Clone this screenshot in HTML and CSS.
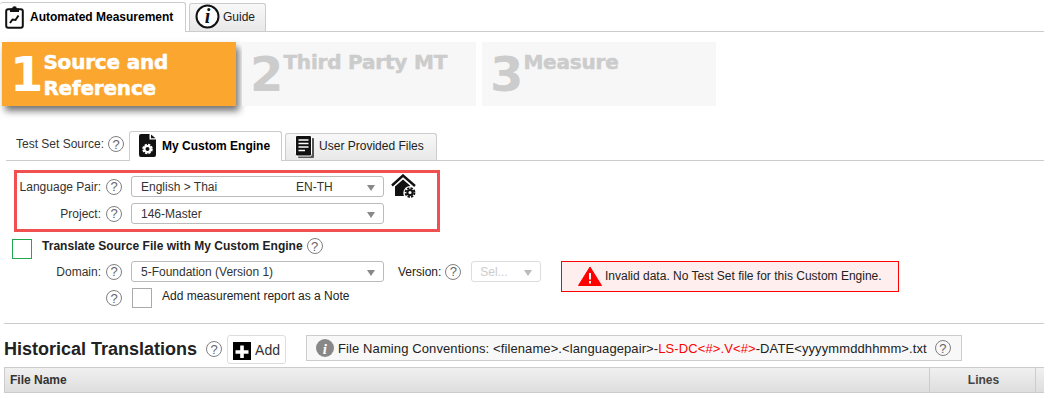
FILE: index.html
```html
<!DOCTYPE html>
<html lang="en">
<head>
    <meta charset="UTF-8">
    <title>Automated Measurement</title>
    <link rel="stylesheet" href="styles.css">
</head>
<body>

<div class="top-tabs">
    <div class="top-tab active">
        <svg class="icon-clip" width="19" height="24" viewBox="0 0 19 24">
            <rect x="1.2" y="4.2" width="16.6" height="18.6" rx="2" fill="none" stroke="#111" stroke-width="2"/>
            <path d="M5 7V3.5H7.2A2.3 2.3 0 0 1 11.8 3.5H14V7Z" fill="#111"/>
            <path d="M5 18L7.5 14.5L10.5 15L13.5 10.5" fill="none" stroke="#111" stroke-width="2"/>
        </svg>
        <span>Automated Measurement</span>
    </div>
    <div class="top-tab">
        <svg width="25" height="25" viewBox="0 0 25 25">
            <circle cx="12.5" cy="12.5" r="11" fill="#fff" stroke="#111" stroke-width="2"/>
            <text x="12.5" y="19" text-anchor="middle" class="info-i">i</text>
        </svg>
        <span>Guide</span>
    </div>
</div>

<div class="steps">
    <div class="step current"><span class="step-num">1</span><span class="step-title">Source and Reference</span></div>
    <div class="step"><span class="step-num">2</span><span class="step-title">Third Party MT</span></div>
    <div class="step"><span class="step-num">3</span><span class="step-title">Measure</span></div>
</div>

<div class="source-tabs">
    <span class="source-label">Test Set Source:</span>
    <span class="help"></span>
    <div class="source-tab active">
        <svg width="17" height="23" viewBox="0 0 17 23">
            <path d="M2 0H10.5V5.5H17V21A2 2 0 0 1 15 23H2A2 2 0 0 1 0 21V2A2 2 0 0 1 2 0Z" fill="#111"/>
            <path d="M12 0.5L16.5 4.2H12Z" fill="#111"/>
            <circle cx="8.5" cy="15" r="3" fill="none" stroke="#fff" stroke-width="2"/>
            <circle cx="8.5" cy="15" r="4.4" fill="none" stroke="#fff" stroke-width="1.8" stroke-dasharray="2.3 1.15"/>
        </svg>
        <span>My Custom Engine</span>
    </div>
    <div class="source-tab">
        <svg width="19" height="23" viewBox="0 0 19 23">
            <rect x="3" y="3" width="16" height="20" rx="1" fill="#555"/>
            <rect x="0.5" y="0.5" width="16" height="20.5" rx="1.5" fill="#111" stroke="#fff" stroke-width="1"/>
            <path d="M3.5 5H13.5M3.5 8.5H13.5M3.5 12H13.5M3.5 15.5H10" stroke="#fff" stroke-width="1.4"/>
        </svg>
        <span>User Provided Files</span>
    </div>
</div>

<div class="highlight">
    <div class="field-row first">
        <label class="field-label">Language Pair:</label>
        <span class="help"></span>
        <div class="select">
            <span class="lang-name">English &gt; Thai</span>
            <span>EN-TH</span>
            <span class="caret"></span>
        </div>
        <svg class="house" width="25" height="25" viewBox="0 0 25 25">
            <path d="M1 11.5L12 1.5L24 12" fill="none" stroke="#111" stroke-width="2.4"/>
            <path d="M4 12.5L12 5.5L19.5 12A7 7 0 0 0 13 22H4Z" fill="#111"/>
            <circle cx="19" cy="18.5" r="2.6" fill="none" stroke="#111" stroke-width="2"/>
            <circle cx="19" cy="18.5" r="4.4" fill="none" stroke="#111" stroke-width="2" stroke-dasharray="2.3 1.15"/>
        </svg>
    </div>
    <div class="field-row">
        <label class="field-label">Project:</label>
        <span class="help"></span>
        <div class="select">
            <span>146-Master</span>
            <span class="caret"></span>
        </div>
    </div>
</div>

<div class="translate-row">
    <span class="check green"></span>
    <b>Translate Source File with My Custom Engine</b>
    <span class="help"></span>
</div>

<div class="domain-block">
    <div class="domain-left">
        <div class="field-row">
            <label class="field-label">Domain:</label>
            <span class="help"></span>
            <div class="select">
                <span>5-Foundation (Version 1)</span>
                <span class="caret"></span>
            </div>
        </div>
        <div class="note-row">
            <span class="help"></span>
            <span class="check"></span>
            <span class="note-text">Add measurement report as a Note</span>
        </div>
    </div>
    <div class="version">
        <label>Version:</label>
        <span class="help"></span>
        <div class="select small">
            <span>Sel...</span>
            <span class="caret"></span>
        </div>
    </div>
    <div class="alert">
        <svg width="24" height="20" viewBox="0 0 24 20">
            <path d="M12 1L23.5 19.5H0.5Z" fill="#f00" stroke="#f00" stroke-linejoin="round"/>
            <path d="M12 7V13.5M12 15V17.5" stroke="#fff" stroke-width="2"/>
        </svg>
        <span>Invalid data. No Test Set file for this Custom Engine.</span>
    </div>
</div>

<div class="history">
    <div class="history-head">
        <h2>Historical Translations</h2>
        <span class="help"></span>
        <div class="add-btn">
            <svg width="18" height="18" viewBox="0 0 18 18">
                <rect width="18" height="18" fill="#000"/>
                <path d="M9 3.5V16M2.5 10H15.5" stroke="#fff" stroke-width="3.6"/>
            </svg>
            <span>Add</span>
        </div>
        <div class="naming">
            <svg width="18" height="18" viewBox="0 0 18 18">
                <circle cx="9" cy="9" r="9" fill="#888"/>
                <text x="9" y="14.5" text-anchor="middle" class="naming-i">i</text>
            </svg>
            <span>File Naming Conventions: &lt;filename&gt;.&lt;languagepair&gt;-<em>LS-DC&lt;#&gt;.V&lt;#&gt;</em>-DATE&lt;yyyymmddhhmm&gt;.txt</span>
            <span class="help"></span>
        </div>
    </div>
    <div class="table-head">
        <div class="col-name">File Name</div>
        <div class="col-lines">Lines</div>
        <div class="col-end"></div>
    </div>
</div>

</body>
</html>
```

FILE: styles.css
```css
body {
    margin: 0;
    font-family: "Liberation Sans", Arial, sans-serif;
    font-size: 12px;
    color: #222;
    background-color: #fff;
    overflow: hidden;
}

.help {
    display: inline-flex;
    justify-content: center;
    align-items: center;
    flex: none;
    width: 16px;
    height: 16px;
    box-sizing: border-box;
    border: 1.5px solid #808080;
    border-radius: 50%;
    color: #666;
    font-size: 13px;
    line-height: 1;
}

.help::before {
    content: "?";
}

/* top tabs */
.top-tabs {
    display: flex;
    align-items: flex-end;
    height: 32px;
    box-sizing: border-box;
    padding-top: 2px;
    border-bottom: 1px solid #ccc;
}

.top-tab {
    display: flex;
    align-items: center;
    gap: 3px;
    width: 77px;
    height: 28px;
    box-sizing: border-box;
    margin-left: 3px;
    padding: 0 0 2px 5px;
    border: 1px solid #ccc;
    border-bottom: none;
    border-radius: 3px 3px 0 0;
    background: linear-gradient(#f8f8f8, #e8e8e8);
}

.top-tab.active {
    width: 186px;
    height: 30px;
    margin: 0 0 -1px 0;
    padding: 0 0 2px 5px;
    gap: 6px;
    border-left: none;
    background: #fff;
    color: #000;
    font-weight: bold;
    font-size: 12px;
}

/* steps */
.steps {
    display: flex;
    gap: 6px;
    margin-top: 10px;
    padding-left: 2px;
}

.step {
    display: flex;
    width: 234px;
    height: 64px;
    box-sizing: border-box;
    padding: 7px 0 0 8px;
    background-color: #f7f7f7;
    color: #ccc;
    font-family: "DejaVu Sans", Verdana, sans-serif;
    font-weight: bold;
}

.step.current {
    background-color: #fba72f;
    color: #fff;
    box-shadow: 3px 5px 7px rgba(0, 0, 0, 0.55);
}

.step-num {
    font-size: 48px;
    line-height: 50px;
    letter-spacing: -1px;
}

.step-title {
    width: 190px;
    margin-left: 1px;
    font-size: 20px;
    line-height: 26px;
    letter-spacing: -0.2px;
    -webkit-text-stroke: 0.5px currentColor;
}

/* source tabs */
.source-tabs {
    display: flex;
    align-items: flex-end;
    height: 30px;
    box-sizing: border-box;
    margin: 25px 0 0 6px;
    padding-left: 10px;
    border-bottom: 1px solid #ccc;
}

.source-label {
    margin-bottom: 9px;
    color: #333;
}

.source-tabs .help {
    margin: 0 5px 8px 4px;
}

.source-tab {
    display: flex;
    align-items: center;
    gap: 5px;
    width: 152px;
    height: 27px;
    box-sizing: border-box;
    margin-left: 3px;
    padding: 0 0 2px 9px;
    border: 1px solid #ccc;
    border-bottom: none;
    border-radius: 3px 3px 0 0;
    background: linear-gradient(#f8f8f8, #e8e8e8);
}

.source-tab.active {
    width: 153px;
    height: 30px;
    margin: 0 0 -1px 0;
    gap: 6px;
    background: #fff;
    color: #000;
    font-weight: bold;
}

/* red box */
.highlight {
    width: 426px;
    height: 62px;
    box-sizing: border-box;
    margin: 9px 0 0 14px;
    padding-top: 3px;
    border: 3px solid #f05050;
}

.field-row {
    display: flex;
    align-items: center;
    margin-bottom: 6px;
}

.highlight .field-label {
    width: 84px;
}

.field-label {
    width: 101px;
    padding-right: 5px;
    box-sizing: content-box;
    text-align: right;
    color: #333;
}

.select {
    position: relative;
    display: flex;
    align-items: center;
    width: 253px;
    height: 21px;
    box-sizing: border-box;
    margin-left: 9px;
    padding-left: 9px;
    border: 1px solid #bbb;
    border-radius: 3px;
    color: #333;
}

.lang-name {
    width: 155px;
}

.caret {
    position: absolute;
    top: 8px;
    right: 8px;
    border-left: 4px solid transparent;
    border-right: 4px solid transparent;
    border-top: 6px solid #888;
}

.house {
    margin: -2px 0 -2px 7px;
}

.check {
    flex: none;
    width: 20px;
    height: 20px;
    box-sizing: border-box;
    border: 1px solid #aaa;
}

.check.green {
    border-color: #1fa84f;
}

.translate-row {
    display: flex;
    align-items: center;
    margin: 7px 0 0 12px;
    color: #222;
}

.translate-row b {
    margin: -6px 0 0 10px;
    letter-spacing: 0.03px;
}

.translate-row .help {
    margin: -6px 0 0 4px;
}

/* domain, version, alert */
.domain-block {
    display: flex;
    align-items: flex-start;
    height: 62px;
    margin-top: 2px;
}

.domain-left .field-row {
    margin-bottom: 6px;
}

.domain-left .field-label {
    padding-right: 5px;
}

.domain-left {
    width: 398px;
}

.note-row {
    display: flex;
    align-items: center;
    padding-left: 106px;
}

.note-row .check {
    margin: 0 10px;
}

.note-text {
    margin-top: -4px;
}

.version {
    display: flex;
    align-items: center;
    gap: 4px;
    width: 163px;
}

.select.small {
    width: 70px;
    margin-left: 6px;
    padding-left: 8px;
    border-color: #ddd;
    color: #ccc;
}

.select.small .caret {
    border-top-color: #bbb;
}

.alert {
    display: flex;
    align-items: center;
    gap: 3px;
    width: 338px;
    height: 31px;
    box-sizing: border-box;
    padding: 0 0 1px 16px;
    border: 1px solid #f00;
    background-color: #feeeee;
    color: #222;
}

/* historical translations */
.history {
    margin: 0 0 0 4px;
    padding-top: 11px;
    border-top: 1px solid #ccc;
}

.history-head {
    display: flex;
    align-items: flex-start;
    height: 32px;
}

.history-head h2 {
    margin: 2px 0 0 0;
    font-size: 18px;
    line-height: 24px;
    color: #222;
}

.history-head > .help {
    margin: 6px 0 0 9px;
}

.add-btn {
    display: flex;
    align-items: center;
    gap: 4px;
    width: 59px;
    height: 29px;
    box-sizing: border-box;
    margin-left: 5px;
    padding-left: 5px;
    border: 1px solid #ddd;
    border-radius: 3px;
    font-size: 14px;
    color: #333;
}

.add-btn svg {
    margin-top: 3px;
}

.naming {
    display: flex;
    align-items: center;
    gap: 4px;
    width: 656px;
    height: 26px;
    box-sizing: border-box;
    margin-left: 20px;
    padding-left: 9px;
    border: 1px solid #ccc;
    background-color: #f8f8f8;
    color: #222;
    font-size: 13px;
    letter-spacing: 0.1px;
}

.naming em {
    font-style: normal;
    color: #f00;
}

.naming .help {
    margin-left: 4px;
    letter-spacing: 0;
}

.table-head {
    display: flex;
    height: 26px;
    box-sizing: border-box;
    border: 1px solid #ccc;
    border-right: none;
    background: linear-gradient(#f0f0f0, #dedede);
    color: #333;
    font-weight: bold;
    line-height: 24px;
}

.col-name {
    width: 924px;
    box-sizing: border-box;
    padding-left: 5px;
}

.col-lines {
    width: 107px;
    box-sizing: border-box;
    padding-left: 2px;
    border-left: 1px solid #ccc;
    border-right: 1px solid #ccc;
    text-align: center;
    color: #444;
}

.col-end {
    flex: 1;
}

.info-i {
    font-family: "Liberation Serif", serif;
    font-style: italic;
    font-weight: bold;
    font-size: 20px;
    fill: #111;
}

.naming-i {
    font-family: "Liberation Serif", serif;
    font-style: italic;
    font-weight: bold;
    font-size: 15px;
    fill: #fff;
}
```
